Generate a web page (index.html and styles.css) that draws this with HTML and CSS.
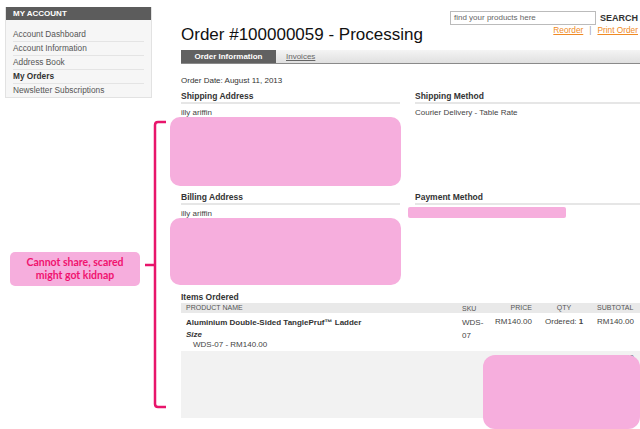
FILE: index.html
```html
<!DOCTYPE html>
<html>
<head>
<meta charset="utf-8">
<link rel="stylesheet" href="styles.css">
</head>
<body>
<div class="page">
  <aside class="sidebar">
    <div class="block-title">MY ACCOUNT</div>
    <ul class="nav">
      <li>Account Dashboard</li>
      <li>Account Information</li>
      <li>Address Book</li>
      <li class="current">My Orders</li>
      <li>Newsletter Subscriptions</li>
    </ul>
  </aside>
  <main class="main">
    <div class="top">
      <h1 class="title">Order #100000059 - Processing</h1>
      <div class="tools">
        <div class="search">
          <div class="search-input">find your products here</div>
          <span class="search-btn">SEARCH</span>
        </div>
        <div class="links"><a>Reorder</a><span class="sep">|</span><a>Print Order</a></div>
      </div>
    </div>
    <div class="tabs">
      <span class="tab active">Order Information</span>
      <span class="tab">Invoices</span>
    </div>
    <p class="date">Order Date: August 11, 2013</p>
    <div class="cols">
      <section class="box">
        <h2 class="box-title">Shipping Address</h2>
        <div class="box-content addr">illy ariffin</div>
      </section>
      <section class="box">
        <h2 class="box-title">Shipping Method</h2>
        <div class="box-content addr">Courier Delivery - Table Rate</div>
      </section>
      <section class="box">
        <h2 class="box-title">Billing Address</h2>
        <div class="box-content addr2">illy ariffin</div>
      </section>
      <section class="box">
        <h2 class="box-title">Payment Method</h2>
        <div class="box-content addr2"></div>
      </section>
    </div>
    <h2 class="items-title">Items Ordered</h2>
    <div class="table">
      <div class="thead">
        <span class="c-name">PRODUCT NAME</span>
        <span class="c-sku">SKU</span>
        <span class="c-price">PRICE</span>
        <span class="c-qty">QTY</span>
        <span class="c-sub">SUBTOTAL</span>
      </div>
      <div class="trow">
        <div class="c-name">
          <div class="pname">Aluminium Double-Sided TanglePruf™ Ladder</div>
          <div class="opt-label">Size</div>
          <div class="opt-value">WDS-07 - RM140.00</div>
        </div>
        <span class="c-sku">WDS-<br>07</span>
        <span class="c-price">RM140.00</span>
        <span class="c-qty">Ordered: <b>1</b></span>
        <span class="c-sub">RM140.00</span>
      </div>
      <div class="tfoot">
        <span class="t-label">Subtotal</span>
        <span class="t-val">RM140.00</span>
      </div>
    </div>
  </main>

  <div class="redact r1"></div>
  <div class="redact r2"></div>
  <div class="redact r3"></div>
  <div class="redact r4"></div>

  <svg class="bracket" width="30" height="300" viewBox="0 0 30 300">
    <path d="M22 4 H14 Q11 4 11 7 V286 Q11 289 14 289 H22" fill="none" stroke="#e8156b" stroke-width="2.5"/>
    <path d="M1 147 H11" fill="none" stroke="#e8156b" stroke-width="2.5"/>
  </svg>
  <div class="note">Cannot share, scared<br>might got kidnap</div>
</div>
</body>
</html>
```

FILE: styles.css
```css
* { box-sizing: border-box; }
html, body { margin: 0; padding: 0; background: #fff; }
body {
  font-family: "Liberation Sans", Arial, sans-serif;
  color: #333;
  width: 640px;
  height: 429px;
  overflow: hidden;
}
.page {
  position: relative;
  display: flex;
  width: 640px;
  height: 429px;
}
.sidebar {
  margin: 7px 0 0 5px;
  width: 147px;
  height: 91px;
  background: #f6f6f6;
  border: 1px solid #e2e2e2;
  border-top: none;
  flex: none;
}
.block-title {
  background: #5c5c5c;
  color: #fff;
  font-weight: bold;
  font-size: 8px;
  height: 13px;
  line-height: 13px;
  padding-left: 7px;
}
.nav {
  list-style: none;
  margin: 0;
  padding: 8px 7px 0 7px;
}
.nav li {
  font-size: 8.3px;
  color: #555;
  height: 14px;
  line-height: 13px;
  border-bottom: 1px solid #e4e4e4;
  white-space: nowrap;
}
.nav li:last-child { border-bottom: none; }
.nav li.current { font-weight: bold; color: #333; }

.main {
  margin-left: 29px;
  flex: 1;
  padding-top: 11px;
}
.top {
  display: flex;
  justify-content: space-between;
  height: 39px;
}
.title {
  margin: 14px 0 0 0;
  font-weight: normal;
  font-size: 17px;
  line-height: 19px;
  color: #111;
  white-space: nowrap;
}
.tools {
  margin-right: 3px;
  display: flex;
  flex-direction: column;
  align-items: flex-end;
}
.search {
  display: flex;
  align-items: center;
  gap: 4px;
}
.search-input {
  width: 146px;
  height: 14px;
  border: 1px solid #bbb;
  font-size: 8px;
  line-height: 12px;
  padding-left: 3px;
  color: #666;
}
.search-btn {
  font-weight: bold;
  font-size: 9px;
  color: #333;
}
.links {
  font-size: 8.3px;
  margin-top: 0;
  display: flex;
  gap: 6px;
}
.links a { color: #f08a24; text-decoration: underline; }
.links .sep { color: #999; }

.tabs {
  height: 14px;
  display: flex;
  background: linear-gradient(#f4f4f4, #e0e0e0);
  border-bottom: 1px solid #8a8a8a;
}
.tab {
  font-size: 8px;
  line-height: 14px;
  padding: 0 8px;
  color: #666;
  text-decoration: underline;
}
.tab.active {
  background: #616161;
  color: #fff;
  font-weight: bold;
  text-decoration: none;
  width: 95px;
  padding: 0;
  text-align: center;
  margin-right: 2px;
}
.date {
  margin: 12px 0 0 0;
  font-size: 8px;
  color: #333;
  line-height: 10px;
}
.cols {
  display: grid;
  grid-template-columns: 219px 225px;
  column-gap: 15px;
  margin-top: 5px;
}
.box-title {
  margin: 0;
  font-size: 8.5px;
  font-weight: bold;
  color: #333;
  line-height: 10px;
  padding-bottom: 1px;
  border-bottom: 2px solid #e6e6e6;
}
.box-content {
  font-size: 8px;
  color: #444;
  padding-top: 4px;
  line-height: 10px;
}
.addr { height: 88px; }
.addr2 { height: 87px; }
.items-title {
  margin: 0;
  font-size: 8.5px;
  font-weight: bold;
  line-height: 11px;
  color: #333;
}
.table { margin-top: 0; }
.thead, .trow, .tfoot {
  display: grid;
  grid-template-columns: 281px 33px 37px 58px 51px;
}
.thead {
  background: #e9e9e9;
  height: 10px;
  font-size: 7px;
  line-height: 10px;
  color: #555;
}
.thead .c-name { padding-left: 5px; }
.thead .c-price { text-align: right; padding-right: 0; }
.thead .c-qty { text-align: center; padding-left: 6px; }
.thead .c-sub { text-align: left; padding-left: 7px; }
.trow {
  font-size: 8px;
  color: #444;
  padding-top: 4px;
  height: 38px;
}
.trow .c-name { padding-left: 5px; }
.pname { font-weight: bold; color: #333; line-height: 11px; }
.opt-label { font-weight: bold; font-style: italic; color: #333; margin-top: 2px; line-height: 10px; }
.opt-value { padding-left: 7px; line-height: 10px; }
.c-sku { line-height: 13px; margin-top: -1px; }
.trow .c-price { text-align: right; padding-right: 0; }
.trow .c-qty { padding-left: 13px; white-space: nowrap; }
.trow .c-sub { padding-left: 7px; }
.tfoot {
  background: #f2f2f2;
  height: 67px;
  font-size: 8px;
  color: #666;
  padding-top: 2px;
}
.t-label { grid-column: 3 / 5; text-align: right; padding-right: 8px; }
.t-val { padding-left: 7px; }

.redact {
  position: absolute;
  background: #f6aedd;
}
.r1 { left: 170px; top: 117px; width: 231px; height: 69px; border-radius: 10px; }
.r2 { left: 170px; top: 218px; width: 231px; height: 67px; border-radius: 10px; }
.r3 { left: 408px; top: 207px; width: 158px; height: 11px; border-radius: 2px; }
.r4 { left: 483px; top: 355px; width: 157px; height: 74px; border-radius: 12px; }

.bracket {
  position: absolute;
  left: 144px;
  top: 118px;
}
.note {
  position: absolute;
  left: 10px;
  top: 252px;
  width: 130px;
  height: 34px;
  background: #f6aedd;
  border-radius: 5px;
  color: #f0136f;
  font-family: Lato, "Open Sans", sans-serif;
  font-weight: bold;
  font-size: 10.5px;
  line-height: 13px;
  text-align: center;
  padding-top: 4px;
}
```
